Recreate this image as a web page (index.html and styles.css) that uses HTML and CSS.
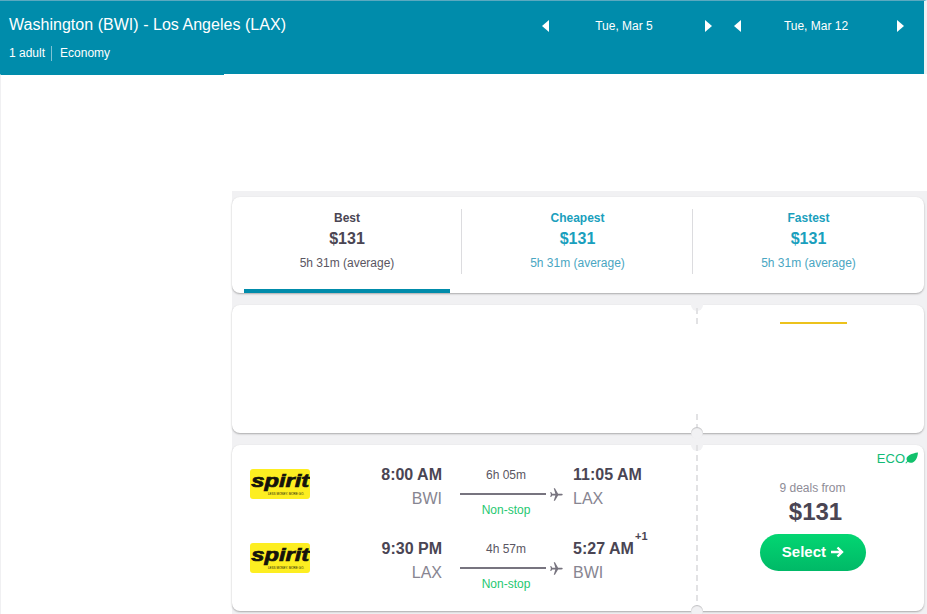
FILE: index.html
```html
<!DOCTYPE html>
<html lang="en">
<head>
<meta charset="utf-8">
<title>Flights</title>
<link rel="stylesheet" href="styles.css">
</head>
<body>
<header class="topbar">
  <div class="route">
    <div class="route-title">Washington (BWI) - Los Angeles (LAX)</div>
    <div class="route-meta"><span class="adults">1 adult</span><span>Economy</span></div>
  </div>
  <div class="dates">
    <div class="date-picker">
      <svg class="caret" viewBox="0 0 7 12"><path d="M7 0V12L0 6Z"/></svg>
      <span>Tue, Mar 5</span>
      <svg class="caret" viewBox="0 0 7 12"><path d="M0 0V12L7 6Z"/></svg>
    </div>
    <div class="date-picker">
      <svg class="caret" viewBox="0 0 7 12"><path d="M7 0V12L0 6Z"/></svg>
      <span>Tue, Mar 12</span>
      <svg class="caret" viewBox="0 0 7 12"><path d="M0 0V12L7 6Z"/></svg>
    </div>
  </div>
</header>
<div class="layout">
  <aside class="sidebar"><div class="sidebar-panel"></div></aside>
  <main class="results">
    <section class="card tabs">
      <div class="tab active">
        <div class="tab-name">Best</div>
        <div class="tab-price">$131</div>
        <div class="tab-time">5h 31m (average)</div>
      </div>
      <div class="tab">
        <div class="tab-name">Cheapest</div>
        <div class="tab-price">$131</div>
        <div class="tab-time">5h 31m (average)</div>
      </div>
      <div class="tab">
        <div class="tab-name">Fastest</div>
        <div class="tab-price">$131</div>
        <div class="tab-time">5h 31m (average)</div>
      </div>
    </section>
    <section class="card ticket blank">
      <div class="ticket-main"></div>
      <div class="ticket-side"><div class="ad-line"></div></div>
    </section>
    <section class="card ticket flight">
      <div class="ticket-main">
        <div class="leg">
          <div class="logo"><span class="logo-name">spirit</span><span class="logo-tag">LESS MONEY. MORE GO.</span></div>
          <div class="stop depart"><div class="time">8:00 AM</div><div class="code">BWI</div></div>
          <div class="path">
            <div class="duration">6h 05m</div>
            <div class="track"><span class="line"></span><svg class="plane" viewBox="0 0 24 24"><path d="M22 12c0-.9-1-1.400-2-1.400h-5.500L9.500 2H7.600l2.600 8.600H5.200L3.400 8H2l1 4-1 4h1.400l1.800-2.600h5l-2.600 8.600h1.900l5-8.600H20c1 0 2-.5 2-1.400z"/></svg></div>
            <div class="stops">Non-stop</div>
          </div>
          <div class="stop arrive"><div class="time">11:05 AM</div><div class="code">LAX</div></div>
        </div>
        <div class="leg">
          <div class="logo"><span class="logo-name">spirit</span><span class="logo-tag">LESS MONEY. MORE GO.</span></div>
          <div class="stop depart"><div class="time">9:30 PM</div><div class="code">LAX</div></div>
          <div class="path">
            <div class="duration">4h 57m</div>
            <div class="track"><span class="line"></span><svg class="plane" viewBox="0 0 24 24"><path d="M22 12c0-.9-1-1.400-2-1.400h-5.500L9.500 2H7.600l2.600 8.600H5.200L3.400 8H2l1 4-1 4h1.400l1.800-2.600h5l-2.600 8.600h1.900l5-8.600H20c1 0 2-.5 2-1.400z"/></svg></div>
            <div class="stops">Non-stop</div>
          </div>
          <div class="stop arrive"><div class="time">5:27 AM<sup class="plus">+1</sup></div><div class="code">BWI</div></div>
        </div>
      </div>
      <div class="ticket-side">
        <div class="eco">ECO<svg class="leaf" viewBox="0 0 14 12"><path d="M14 0C13.500 6 11 11 6 11.200 4.800 11.200 3.800 10.800 3 10L1.200 12 .4 11.300 2.300 9.300C-.5 4.500 6 1 14 0Z"/></svg></div>
        <div class="deals">9 deals from</div>
        <div class="price">$131</div>
        <button class="select" type="button">Select <svg class="arrow" viewBox="0 0 14 12"><path d="M1 6H12M7.500 1.500 12 6 7.500 10.500"/></svg></button>
      </div>
    </section>
  </main>
</div>
</body>
</html>
```
FILE: styles.css
```css
* { box-sizing: border-box; }
html, body { margin: 0; height: 100%; }
body {
  width: 927px;
  height: 614px;
  overflow: hidden;
  background: #fff;
  font-family: "Liberation Sans", Arial, sans-serif;
  color: #4a4553;
  display: flex;
  flex-direction: column;
}
.topbar {
  height: 74px;
  flex: none;
  background: #008cab;
  border-top: 1px solid #5aa9c0;
  border-right: 3px solid #f1f1f3;
  color: #fff;
  display: flex;
  justify-content: space-between;
}
.route { padding: 14px 0 0 9px; }
.route-title { font-size: 16px; line-height: 20px; letter-spacing: .03px; }
.route-meta { display: flex; margin-top: 11px; font-size: 12px; line-height: 15px; }
.adults { padding-right: 6px; margin-right: 8px; border-right: 1px solid #7fc3d4; }
.dates { display: flex; gap: 22px; padding-top: 17px; margin-right: 20px; }
.date-picker {
  width: 170px;
  height: 16px;
  display: flex;
  justify-content: space-between;
  align-items: center;
  font-size: 12px;
}
.date-picker span { line-height: 16px; margin-right: 6px; }
.caret { width: 7px; height: 12px; fill: #fff; }
.layout { flex: 1; display: flex; min-height: 0; }
.sidebar { width: 232px; flex: none; }
.sidebar-panel {
  width: 224px;
  height: 100%;
  border-top: 1px solid #008cab;
  border-left: 1px solid #f0f0f2;
}
.results {
  flex: 1;
  margin-top: 117px;
  background: #f1f1f3;
  padding: 6px 3px 0 0;
  display: flex;
  flex-direction: column;
  gap: 12px;
}
.card {
  background: #fff;
  border-radius: 8px;
  box-shadow: 0 1px 2px rgba(0, 0, 0, .3);
}
.tabs { height: 96px; display: grid; grid-template-columns: 230px 231px 231px; }
.tab {
  position: relative;
  text-align: center;
  padding-top: 14px;
  color: #1a9fbd;
}
.tab:not(:last-child)::after {
  content: "";
  position: absolute;
  right: 0;
  top: 12px;
  height: 65px;
  width: 1px;
  background: #dcdcdf;
}
.tab.active { color: #4a4553; }
.tab.active::before {
  content: "";
  position: absolute;
  left: 12px;
  bottom: 0;
  width: 206px;
  height: 4px;
  background: #008cab;
}
.tab-name { font-size: 12px; line-height: 14px; font-weight: 700; }
.tab-price { font-size: 16px; line-height: 20px; font-weight: 700; margin-top: 4px; }
.tab-time { font-size: 12px; line-height: 14px; margin-top: 7px; color: #5a5662; }
.tab:not(.active) .tab-time { color: #4aa6c2; }
.ticket { display: flex; position: relative; }
.blank { height: 128px; }
.flight { height: 166px; }
.ticket-main { width: 464px; flex: none; position: relative; }
.ticket-side {
  flex: 1;
  position: relative;
  border-left: 2px dashed #e2e2e4;
  text-align: center;
}
.ticket::before, .ticket::after {
  content: "";
  position: absolute;
  left: 459px;
  width: 12px;
  height: 12px;
  border-radius: 50%;
  background: #f1f1f3;
}
.ticket::before { top: -6px; }
.ticket::after { bottom: -6px; box-shadow: inset 0 1px 1px rgba(0, 0, 0, .2); }
.blank .ticket-side { border-left-color: transparent; }
.blank .ticket-main::before, .blank .ticket-main::after {
  content: "";
  position: absolute;
  left: 464px;
  width: 2px;
  height: 16px;
  background: repeating-linear-gradient(#e2e2e4 0 6px, transparent 6px 10px);
}
.blank .ticket-main::before { top: 3px; }
.blank .ticket-main::after { bottom: 3px; }
.ad-line { width: 67px; height: 2px; background: #ecc21c; margin: 17px 0 0 82px; }
.flight .ticket-main { padding-top: 21px; }
.leg {
  display: grid;
  grid-template-columns: 60px 132px 131px auto;
  height: 74px;
  margin-left: 18px;
}
.logo {
  width: 60px;
  height: 30px;
  margin-top: 3px;
  background: #fdee21;
  border-radius: 3px;
  color: #15130c;
  display: flex;
  flex-direction: column;
  align-items: center;
  overflow: hidden;
}
.logo-name {
  font-size: 19px;
  line-height: 22px;
  margin-top: 1px;
  font-weight: 700;
  font-style: italic;
  transform: scaleX(1.25);
  -webkit-text-stroke: .7px #15130c;
}
.logo-tag {
  font-size: 3px;
  line-height: 4px;
  white-space: nowrap;
  margin-left: 12px;
}
.depart { text-align: right; }
.time { font-size: 16px; line-height: 18px; font-weight: 700; position: relative; white-space: nowrap; }
.code { font-size: 16px; line-height: 18px; color: #878591; margin-top: 6px; }
.plus { position: absolute; left: 62px; top: -10px; font-size: 11px; line-height: 12px; vertical-align: baseline; }
.path { padding-left: 18px; }
.duration { width: 92px; text-align: center; font-size: 12px; line-height: 16px; margin-top: 1px; color: #5a5662; }
.track { display: flex; align-items: center; height: 14px; margin-top: 4px; }
.line { width: 86px; height: 2px; background: #77747f; }
.plane { width: 15px; height: 15px; fill: #77747f; margin-left: 3px; flex: none; }
.stops { width: 92px; text-align: center; font-size: 12px; line-height: 14px; margin-top: 2px; color: #1fc871; }
.eco {
  position: absolute;
  right: 6px;
  top: 6px;
  font-size: 13px;
  line-height: 16px;
  color: #12bb77;
  display: flex;
  align-items: center;
}
.leaf { width: 13px; height: 12px; fill: #12c16c; margin-top: -3px; }
.deals { font-size: 12px; line-height: 14px; color: #8e8c97; margin-top: 36px; margin-left: 3px; }
.price { font-size: 24px; line-height: 28px; font-weight: 700; margin-top: 3px; margin-left: 9px; }
.select {
  display: block;
  width: 106px;
  height: 37px;
  margin: 8px 0 0 62px;
  border: 0;
  border-radius: 19px;
  background: linear-gradient(#03d672, #00b967);
  color: #fff;
  font: 700 15px "Liberation Sans", Arial, sans-serif;
  padding: 0 0 3px;
}
.arrow { width: 14px; height: 12px; fill: none; stroke: #fff; stroke-width: 2.4; vertical-align: -1px; }
```
